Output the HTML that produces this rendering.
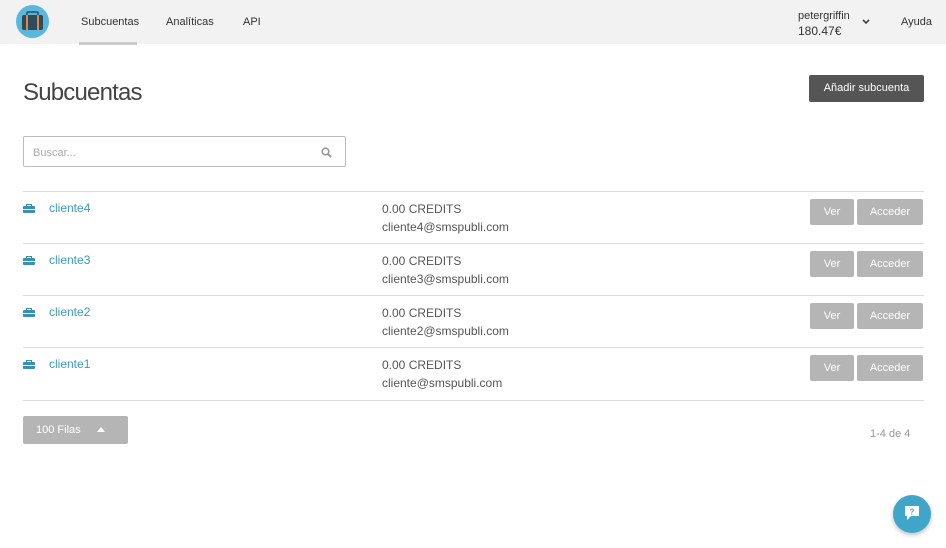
<!DOCTYPE html>
<html><head><meta charset="utf-8"><style>
*{margin:0;padding:0;box-sizing:border-box}
body{width:946px;height:548px;background:#fff;font-family:"Liberation Sans",sans-serif;color:#444;position:relative;overflow:hidden}
.top{position:absolute;left:0;top:0;width:946px;height:44px;background:#f2f2f2}
.nav{position:absolute;top:16px;font-size:11px;color:#333}
.ul{position:absolute;left:79px;top:42px;width:58px;height:3px;background:#ccc}
h1{position:absolute;left:23px;top:79px;font-size:24px;font-weight:normal;color:#444;letter-spacing:-0.8px}
.add{position:absolute;left:809px;top:75px;width:115px;height:27px;background:#555;color:#fff;font-size:11px;text-align:center;line-height:27px;border-radius:2px}
.search{position:absolute;left:23px;top:136px;width:323px;height:31px;border:1px solid #bbb;border-radius:2px;font-size:11px;color:#aaa;padding:10px 9px}
.row{position:absolute;left:23px;width:901px;height:52px;border-top:1px solid #ddd}
.row .ic{position:absolute;left:0;top:12px}
.row .nm{position:absolute;left:26px;top:9px;font-size:12px;color:#3a9cc0}
.row .cr{position:absolute;left:359px;top:8px;font-size:12px;line-height:18px;color:#555}
.btn{position:absolute;top:7px;height:26px;background:#b5b5b5;color:#fff;font-size:11px;text-align:center;line-height:26px;border-radius:2px}
.filas{position:absolute;left:23px;top:416px;width:105px;height:28px;background:#b5b5b5;color:#fff;font-size:11px;line-height:28px;padding-left:13px;border-radius:2px}
</style></head><body>
<div class="top">
<svg style="position:absolute;left:16px;top:5px" width="33" height="33" viewBox="0 0 33 33"><circle cx="16.5" cy="16.5" r="16.5" fill="#5ab8dc"/><rect x="11" y="7" width="11" height="4" rx="1" fill="none" stroke="#2e4a5e" stroke-width="1.5"/><rect x="6" y="10" width="21" height="15" rx="2" fill="#2e4a5e"/><rect x="10" y="10" width="2" height="15" fill="#e08a3c"/><rect x="21" y="10" width="2" height="15" fill="#e08a3c"/></svg>
<div class="nav" style="left:81px">Subcuentas</div>
<div class="nav" style="left:166px">Analíticas</div>
<div class="nav" style="left:243px">API</div>
<div style="position:absolute;left:798px;top:9px;font-size:11px;color:#333;line-height:15px">petergriffin<br><span style="font-size:12px">180.47€</span></div>
<svg style="position:absolute;left:862px;top:19px" width="8" height="6" viewBox="0 0 8 6"><path d="M1 1l3 3 3-3" stroke="#444" stroke-width="1.6" fill="none"/></svg>
<div class="nav" style="left:901px">Ayuda</div>
</div>
<div class="ul"></div>
<h1>Subcuentas</h1>
<div class="add">Añadir subcuenta</div>
<div class="search">Buscar...
<svg style="position:absolute;left:297px;top:10px" width="11" height="11" viewBox="0 0 11 11"><circle cx="4.5" cy="4.5" r="3.3" stroke="#999" stroke-width="1.6" fill="none"/><path d="M7 7l3 3" stroke="#999" stroke-width="2"/></svg></div>

<div class="row" style="top:191px"><svg class="ic" width="12" height="9" viewBox="0 0 12 9"><rect x="3.5" y="0.5" width="5" height="2" fill="none" stroke="#3a8fb5"/><rect x="0" y="2" width="12" height="7" rx="1" fill="#3a8fb5"/><rect x="0" y="5" width="12" height="1" fill="#fff"/></svg><div class="nm">cliente4</div><div class="cr">0.00 CREDITS<br>cliente4@smspubli.com</div><div class="btn" style="left:787px;width:44px">Ver</div><div class="btn" style="left:834px;width:66px">Acceder</div></div>
<div class="row" style="top:243px"><svg class="ic" width="12" height="9" viewBox="0 0 12 9"><rect x="3.5" y="0.5" width="5" height="2" fill="none" stroke="#3a8fb5"/><rect x="0" y="2" width="12" height="7" rx="1" fill="#3a8fb5"/><rect x="0" y="5" width="12" height="1" fill="#fff"/></svg><div class="nm">cliente3</div><div class="cr">0.00 CREDITS<br>cliente3@smspubli.com</div><div class="btn" style="left:787px;width:44px">Ver</div><div class="btn" style="left:834px;width:66px">Acceder</div></div>
<div class="row" style="top:295px"><svg class="ic" width="12" height="9" viewBox="0 0 12 9"><rect x="3.5" y="0.5" width="5" height="2" fill="none" stroke="#3a8fb5"/><rect x="0" y="2" width="12" height="7" rx="1" fill="#3a8fb5"/><rect x="0" y="5" width="12" height="1" fill="#fff"/></svg><div class="nm">cliente2</div><div class="cr">0.00 CREDITS<br>cliente2@smspubli.com</div><div class="btn" style="left:787px;width:44px">Ver</div><div class="btn" style="left:834px;width:66px">Acceder</div></div>
<div class="row" style="top:347px;height:54px;border-bottom:1px solid #ddd"><svg class="ic" width="12" height="9" viewBox="0 0 12 9"><rect x="3.5" y="0.5" width="5" height="2" fill="none" stroke="#3a8fb5"/><rect x="0" y="2" width="12" height="7" rx="1" fill="#3a8fb5"/><rect x="0" y="5" width="12" height="1" fill="#fff"/></svg><div class="nm">cliente1</div><div class="cr">0.00 CREDITS<br>cliente@smspubli.com</div><div class="btn" style="left:787px;width:44px">Ver</div><div class="btn" style="left:834px;width:66px">Acceder</div></div>

<div class="filas">100 Filas<svg style="position:absolute;left:74px;top:11px" width="8" height="5" viewBox="0 0 8 5"><path d="M0 5L4 0 8 5z" fill="#fff"/></svg></div>
<div style="position:absolute;left:870px;top:428px;font-size:11px;color:#999">1-4 de 4</div>
<div style="position:absolute;left:893px;top:495px;width:38px;height:38px;border-radius:50%;background:#3fa6c9;box-shadow:0 2px 5px rgba(0,0,0,.25)">
<svg style="position:absolute;left:12px;top:11px" width="14" height="15" viewBox="0 0 14 15"><path d="M0 0h14v10H6l-4 4v-4H0z" fill="#fff"/><text x="7" y="8.5" font-size="8" font-weight="bold" text-anchor="middle" fill="#3fa6c9" font-family="Liberation Sans">?</text></svg></div>
</body></html>
